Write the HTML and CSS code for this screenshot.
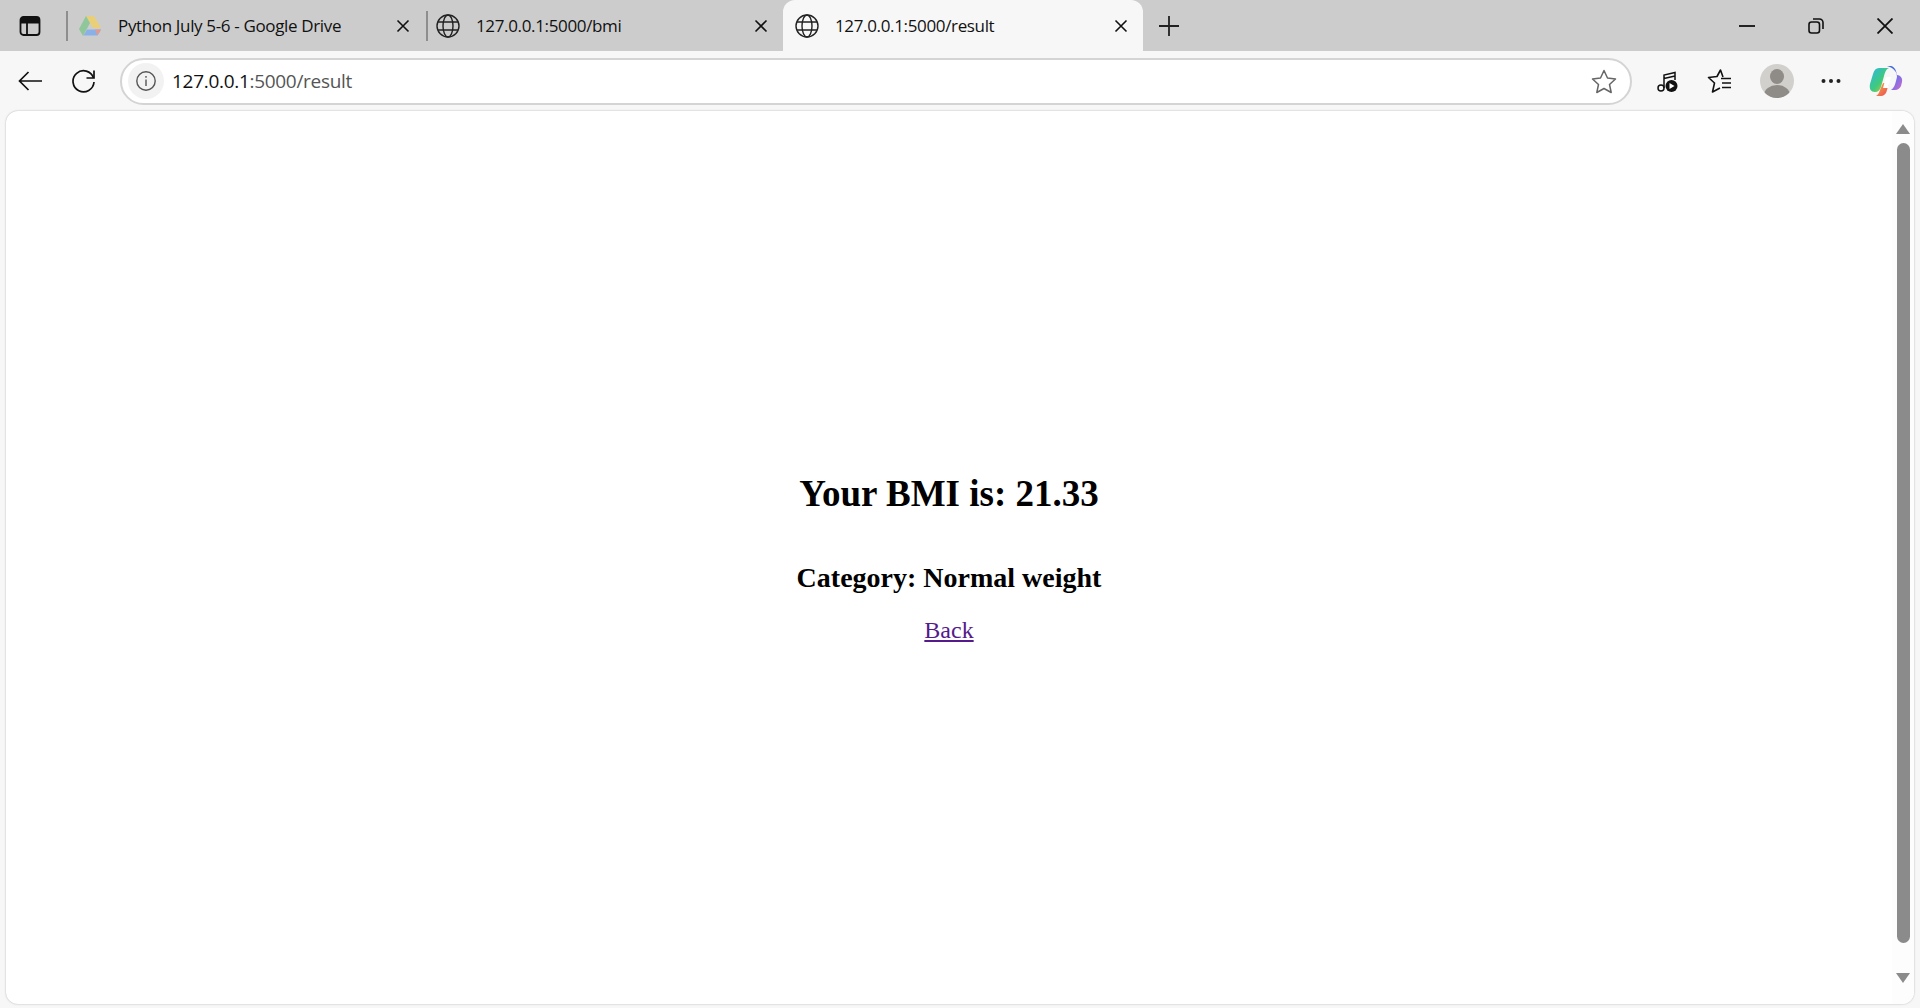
FILE: index.html
```html
<!DOCTYPE html>
<html lang="en">
<head>
    <meta charset="UTF-8">
    <title>127.0.0.1:5000/result</title>
    <link rel="stylesheet" href="styles.css">
</head>
<body>
    <div class="tabstrip">
        <div class="sidebar-btn">
            <svg width="22" height="22" viewBox="0 0 22 22" fill="none" stroke="#111" stroke-width="1.8"><rect x="1.5" y="2" width="19" height="18" rx="3"/><path d="M1.5 7.5h19M8 7.5V20"/><path d="M2 3h18v4.5H2z" fill="#111" stroke="none"/></svg>
        </div>
        <div class="sep"></div>
        <div class="tab tab-first">
            <svg class="favicon" width="24" height="22" viewBox="0 0 24 22"><path d="M8 1h8l7 12h-8z" fill="#e9cf78"/><path d="M8 1l4 7-7 13-4-7z" fill="#8fc79a"/><path d="M5.500 20.500L9 14.500h14l-3.500 6z" fill="#8ab0e8"/><path d="M19.500 20.500L23 14.500h-6z" fill="#e09a90"/></svg>
            <span class="tab-title">Python July 5-6 - Google Drive</span>
            <svg class="tab-close" width="14" height="14" viewBox="0 0 14 14" stroke="#111" stroke-width="1.6"><path d="M1.500 1.500l11 11M12.500 1.500l-11 11"/></svg>
        </div>
        <div class="sep"></div>
        <div class="tab tab-second">
            <svg class="favicon" width="24" height="24" viewBox="0 0 24 24" fill="none" stroke="#222" stroke-width="1.400"><circle cx="12" cy="12" r="11"/><ellipse cx="12" cy="12" rx="5" ry="11"/><path d="M2 8h20M2 16h20"/></svg>
            <span class="tab-title">127.0.0.1:5000/bmi</span>
            <svg class="tab-close" width="14" height="14" viewBox="0 0 14 14" stroke="#111" stroke-width="1.6"><path d="M1.500 1.500l11 11M12.500 1.500l-11 11"/></svg>
        </div>
        <div class="tab tab-active">
            <svg class="favicon" width="24" height="24" viewBox="0 0 24 24" fill="none" stroke="#222" stroke-width="1.400"><circle cx="12" cy="12" r="11"/><ellipse cx="12" cy="12" rx="5" ry="11"/><path d="M2 8h20M2 16h20"/></svg>
            <span class="tab-title">127.0.0.1:5000/result</span>
            <svg class="tab-close" width="14" height="14" viewBox="0 0 14 14" stroke="#111" stroke-width="1.6"><path d="M1.500 1.500l11 11M12.500 1.500l-11 11"/></svg>
        </div>
        <div class="new-tab">
            <svg width="22" height="22" viewBox="0 0 22 22" stroke="#222" stroke-width="1.800"><path d="M11 1v20M1 11h20"/></svg>
        </div>
        <div class="window-controls">
            <svg width="16" height="16" viewBox="0 0 16 16" stroke="#111" stroke-width="1.800"><path d="M0 8h16"/></svg>
            <svg width="16" height="16" viewBox="0 0 16 16" fill="none" stroke="#111" stroke-width="1.600"><rect x="1" y="4" width="10.500" height="11" rx="2.500"/><path d="M5 1h6.500A3.500 3.500 0 0 1 15 4.500V11"/></svg>
            <svg width="16" height="16" viewBox="0 0 16 16" stroke="#111" stroke-width="1.800"><path d="M.5.500l15 15M15.500.500l-15 15"/></svg>
        </div>
    </div>

    <div class="toolbar">
        <svg class="nav-back" width="24" height="20" viewBox="0 0 24 20" fill="none" stroke="#111" stroke-width="1.700"><path d="M1 10h23M10.500 1L1.500 10l9 9"/></svg>
        <svg class="nav-reload" width="24" height="24" viewBox="0 0 24 24" fill="none" stroke="#111" stroke-width="1.700"><path d="M21.500 9A10.500 10.500 0 1 0 22 13"/><path d="M22 1.500V9h-7.500"/></svg>
        <div class="address">
            <div class="site-info">
                <svg width="20" height="20" viewBox="0 0 20 20" fill="none" stroke="#555" stroke-width="1.400"><circle cx="10" cy="10" r="9.200"/><path d="M10 8.500V15M10 5v1.800"/></svg>
            </div>
            <span class="url"><span class="host">127.0.0.1</span>:5000/result</span>
            <svg class="addr-star" width="26" height="25" viewBox="0 0 26 25" fill="none" stroke="#666" stroke-width="1.500" stroke-linejoin="round"><path d="M13 1.500l3.500 7.500 8 1-6 5.500 1.700 8L13 19.500 5.800 23.500l1.700-8-6-5.500 8-1z"/></svg>
        </div>
        <div class="tools">
            <svg width="22" height="24" viewBox="0 0 22 24" fill="none" stroke="#111" stroke-width="1.500"><circle cx="5" cy="19" r="3"/><path d="M8 19V6l11-2.500V11M8 9.500l11-2.500"/><circle cx="15.500" cy="17" r="6" fill="#111" stroke="none"/><path d="M13.500 14v6l5-3z" fill="#fff" stroke="none"/></svg>
            <svg width="26" height="26" viewBox="0 0 26 26" fill="none" stroke="#111" stroke-width="1.600" stroke-linejoin="round"><path d="M17 9l-2.500-7-3.500 6.500-8.500 1 6 5.500-2 9 7.500-4"/><path d="M15 10.500h10M16 15h9M16 19.500h9"/></svg>
            <div class="avatar"><div class="avatar-head"></div><div class="avatar-body"></div></div>
            <svg class="dots" width="20" height="6" viewBox="0 0 20 6" fill="#222"><circle cx="2.500" cy="3" r="2"/><circle cx="10" cy="3" r="2"/><circle cx="17.500" cy="3" r="2"/></svg>
            <svg width="34" height="32" viewBox="0 0 34 32">
                <defs>
                    <linearGradient id="copA" x1="0" y1="0" x2="1" y2="1"><stop offset="0" stop-color="#2bb8e8"/><stop offset=".55" stop-color="#3fca7c"/><stop offset="1" stop-color="#f4c430"/></linearGradient>
                    <linearGradient id="copB" x1="0" y1="0" x2="1" y2="1"><stop offset="0" stop-color="#1a5fd8"/><stop offset=".6" stop-color="#7a70e8"/><stop offset="1" stop-color="#d56ac8"/></linearGradient>
                    <linearGradient id="copC" x1="0" y1="0" x2="1" y2="1"><stop offset="0" stop-color="#f8b23c"/><stop offset="1" stop-color="#e8465a"/></linearGradient>
                </defs>
                <path d="M10 3h10c-3 1-4 4-5 8l-3 11c-1 3-3 5-6 5-4 0-6-3-5-8l3-10c1-4 3-6 6-6z" fill="url(#copA)"/>
                <path d="M18 1h3c3 0 5 2 6 5l1 4c3 0 6 3 5 7l-1 4c-1 2-3 4-6 4h-4c3-2 4-5 5-9l1-4c0-5-3-9-10-11z" fill="url(#copB)"/>
                <path d="M11 25l3-7h6l-2 7c-1 4-3 6-7 6H7c2-1 3-3 4-6z" fill="url(#copC)"/>
                <path d="M17 12h5l-3 11h-5z" fill="#fff"/>
            </svg>
        </div>
    </div>

    <div class="viewport">
        <main class="page">
            <h1>Your BMI is: 21.33</h1>
            <h2>Category: Normal weight</h2>
            <a class="back-link" href="#">Back</a>
        </main>
        <div class="scrollbar">
            <div class="arrow-up"></div>
            <div class="thumb"></div>
            <div class="arrow-down"></div>
        </div>
    </div>
</body>
</html>
```

FILE: styles.css
```css
html, body {
    height: 100%;
}

body {
    margin: 0;
    display: flex;
    flex-direction: column;
    height: 1008px;
    overflow: hidden;
    background-color: #f7f7f7;
    font-family: "Open Sans", "Noto Sans", sans-serif;
    color: #111;
}

/* tab row */
.tabstrip {
    display: flex;
    align-items: center;
    height: 51px;
    flex: none;
    background-color: #ccc;
}

.sidebar-btn {
    display: flex;
    justify-content: center;
    width: 60px;
    margin-right: 6px;
}

.sep {
    width: 2px;
    height: 30px;
    background-color: #8e8e8e;
    flex: none;
}

.tab {
    display: flex;
    align-items: center;
    height: 100%;
    box-sizing: border-box;
    flex: none;
}

.tab-first {
    width: 358px;
    padding: 0 16px 0 10px;
}

.tab-second {
    width: 355px;
    padding: 0 15px 0 8px;
}

.tab-active {
    width: 360px;
    padding: 0 15px 0 12px;
    background-color: #f7f7f7;
    border-radius: 12px 12px 0 0;
}

.tab-title {
    flex: 1;
    margin-left: 16px;
    font-size: 17px;
    letter-spacing: -0.35px;
    white-space: nowrap;
}

.tab-close {
    flex: none;
}

.new-tab {
    display: flex;
    margin-left: 15px;
}

.window-controls {
    display: flex;
    align-items: center;
    gap: 53px;
    margin-left: auto;
    margin-right: 27px;
}

/* address bar row */
.toolbar {
    display: flex;
    align-items: center;
    height: 60px;
    flex: none;
    box-sizing: border-box;
    padding: 0 17px 0 18px;
}

.nav-back {
    flex: none;
}

.nav-reload {
    flex: none;
    margin-left: 30px;
}

.address {
    display: flex;
    align-items: center;
    flex: none;
    width: 1512px;
    height: 47px;
    box-sizing: border-box;
    margin-left: 24px;
    padding: 0 13px 0 6px;
    background-color: #fff;
    border: 2px solid #d4d4d4;
    border-radius: 24px;
}

.site-info {
    display: flex;
    align-items: center;
    justify-content: center;
    width: 36px;
    height: 36px;
    border-radius: 50%;
    background-color: #f2f2f2;
}

.url {
    flex: 1;
    margin-left: 8px;
    font-size: 19px;
    letter-spacing: -0.3px;
    color: #555;
}

.host {
    color: #111;
}

.tools {
    display: flex;
    align-items: center;
    justify-content: space-between;
    flex: 1;
    margin-left: 24px;
}

.avatar {
    position: relative;
    width: 34px;
    height: 34px;
    border-radius: 50%;
    overflow: hidden;
    background-color: #d2d0cc;
}

.avatar-head {
    position: absolute;
    top: 5px;
    left: 10px;
    width: 14px;
    height: 15px;
    border-radius: 50%;
    background-color: #8f8b87;
}

.avatar-body {
    position: absolute;
    top: 21px;
    left: 4px;
    width: 26px;
    height: 20px;
    border-radius: 50%;
    background-color: #8f8b87;
}

/* web content */
.viewport {
    display: flex;
    width: 1908px;
    height: 893px;
    flex: none;
    margin: 0 0 0 6px;
    overflow: hidden;
    background-color: #fff;
    border-radius: 12px;
    box-shadow: 0 0 2px rgba(0, 0, 0, 0.3);
}

.page {
    flex: 1;
    display: flex;
    flex-direction: column;
    align-items: center;
    justify-content: center;
    font-family: "Liberation Serif", serif;
    color: #000;
}

.page h1 {
    margin: 0;
    font-size: 37px;
}

.page h2 {
    margin: 47px 0 0;
    font-size: 28px;
}

.back-link {
    margin-top: 23px;
    font-size: 24px;
    color: #551a8b;
}

.scrollbar {
    display: flex;
    flex-direction: column;
    align-items: center;
    width: 22px;
    flex: none;
    background-color: #fdfdfd;
}

.arrow-up {
    margin-top: 13px;
    border-left: 7px solid transparent;
    border-right: 7px solid transparent;
    border-bottom: 10px solid #8b8b8b;
}

.thumb {
    width: 13px;
    height: 800px;
    margin-top: 9px;
    border-radius: 7px;
    background-color: #8b8b8b;
}

.arrow-down {
    margin-top: 30px;
    border-left: 7px solid transparent;
    border-right: 7px solid transparent;
    border-top: 10px solid #8b8b8b;
}
```
